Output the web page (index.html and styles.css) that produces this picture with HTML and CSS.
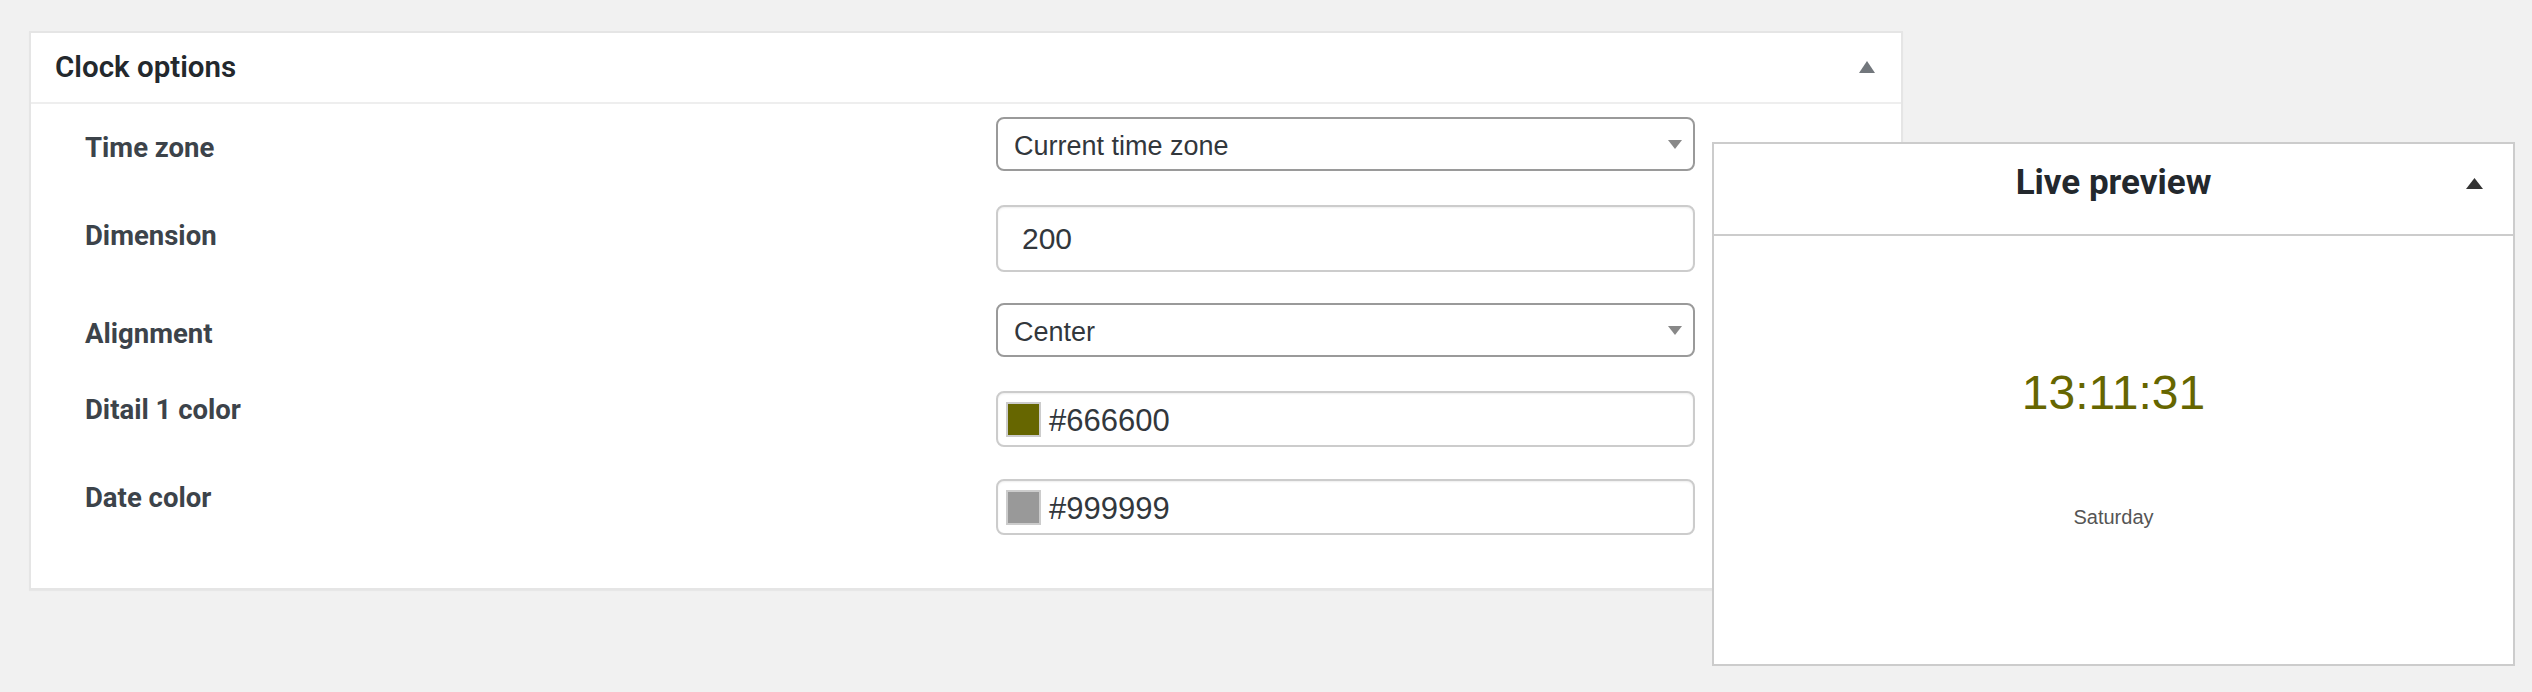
FILE: index.html
```html
<!DOCTYPE html>
<html lang="en">
<head>
<meta charset="utf-8">
<title>Clock options</title>
<link rel="stylesheet" href="styles.css">
</head>
<body>
<div class="page">
  <section class="postbox">
    <header class="postbox-head">
      <h2 class="postbox-title">Clock options</h2>
      <svg class="toggle" width="16" height="12" viewBox="0 0 16 12"><path d="M8 0L16 12H0Z" fill="#72777c"/></svg>
    </header>
    <div class="postbox-body">
      <div class="field-row">
        <div class="field-label">Time zone</div>
        <div class="select"><span>Current time zone</span><svg width="14" height="9" viewBox="0 0 14 9"><path d="M0 0H14L7 9Z" fill="#888"/></svg></div>
      </div>
      <div class="field-row row-number">
        <div class="field-label">Dimension</div>
        <div class="input input-number">200</div>
      </div>
      <div class="field-row row-after-number">
        <div class="field-label">Alignment</div>
        <div class="select"><span>Center</span><svg width="14" height="9" viewBox="0 0 14 9"><path d="M0 0H14L7 9Z" fill="#888"/></svg></div>
      </div>
      <div class="field-row is-color row-first-color">
        <div class="field-label">Ditail 1 color</div>
        <div class="input input-color"><span class="swatch swatch-olive"></span><span>#666600</span></div>
      </div>
      <div class="field-row is-color">
        <div class="field-label">Date color</div>
        <div class="input input-color"><span class="swatch swatch-gray"></span><span>#999999</span></div>
      </div>
    </div>
  </section>

  <aside class="preview">
    <header class="preview-head">
      <span></span>
      <h2 class="preview-title">Live preview</h2>
      <svg class="preview-toggle" width="17" height="11" viewBox="0 0 17 11"><path d="M8.5 0L17 11H0Z" fill="#333"/></svg>
    </header>
    <div class="preview-body">
      <div class="clock-time">13:11:31</div>
      <div class="clock-date">Saturday</div>
    </div>
  </aside>
</div>
</body>
</html>
```

FILE: styles.css
```css
html, body {
  margin: 0;
  background: #f1f1f1;
}

.page {
  position: relative;
  padding: 31px 0 0 29px;
  min-height: 692px;
  box-sizing: border-box;
}

.postbox {
  width: 1874px;
  box-sizing: border-box;
  background: #fff;
  border: 2px solid #e5e5e5;
  box-shadow: 0 1px 1px rgba(0, 0, 0, 0.04);
}

.postbox-head {
  display: flex;
  align-items: center;
  justify-content: space-between;
  padding: 16px 26px 17px 24px;
  border-bottom: 2px solid #eeeeee;
}

.postbox-title {
  margin: 0;
  font: 600 29.5px/36px Roboto, "Liberation Sans", sans-serif;
  color: #23282d;
}

.postbox-body {
  display: flex;
  flex-direction: column;
  gap: 32px;
  padding: 13px 0 53px 54px;
}

.field-row {
  display: grid;
  grid-template-columns: 911px 699px;
  align-items: start;
}

.row-number {
  margin-top: 2px;
}

.row-after-number {
  margin-top: -1px;
}

.row-first-color {
  margin-top: 2px;
}

.field-label {
  padding-top: 15px;
  font: 700 27.5px/32px Roboto, "Liberation Sans", sans-serif;
  color: #3c434a;
}

.is-color .field-label {
  padding-top: 3px;
}

.select {
  box-sizing: border-box;
  height: 54px;
  display: flex;
  align-items: center;
  justify-content: space-between;
  padding: 5px 11px 0 16px;
  border: 2px solid #9a9a9a;
  border-radius: 8px;
  background: #fff;
  font: 27px "Liberation Sans", Arial, sans-serif;
  color: #32373c;
}

.select svg {
  margin-top: -5px;
}

.input {
  box-sizing: border-box;
  display: flex;
  align-items: center;
  border: 2px solid #cccccc;
  border-radius: 8px;
  background: #fff;
  box-shadow: inset 0 1px 2px rgba(0, 0, 0, 0.07);
  font: 30px "Liberation Sans", Arial, sans-serif;
  color: #32373c;
}

.input-number {
  height: 67px;
  padding-left: 24px;
}

.input-color {
  height: 56px;
  padding: 0 0 0 8px;
  gap: 8px;
  font-size: 31px;
}

.input-color span:last-child {
  padding-top: 3px;
}

.swatch {
  width: 35px;
  height: 35px;
  box-sizing: border-box;
  border: 2px solid #cccccc;
}

.swatch-olive {
  background: #666600;
}

.swatch-gray {
  background: #999999;
}

.preview {
  position: absolute;
  left: 1712px;
  top: 142px;
  width: 803px;
  height: 524px;
  box-sizing: border-box;
  background: #fff;
  border: 2px solid #cccccc;
}

.preview-head {
  display: grid;
  grid-template-columns: 1fr auto 1fr;
  align-items: center;
  padding: 19px 30px 31px;
  border-bottom: 2px solid #cccccc;
}

.preview-title {
  margin: 0;
  font: 700 35px/40px Roboto, "Liberation Sans", sans-serif;
  color: #23282d;
}

.preview-toggle {
  justify-self: end;
}

.preview-body {
  padding-top: 129px;
  text-align: center;
  font-family: "Liberation Sans", Arial, sans-serif;
}

.clock-time {
  font-size: 48px;
  line-height: 56px;
  color: #666600;
}

.clock-date {
  margin-top: 84px;
  font-size: 20px;
  line-height: 24px;
  color: #555555;
}
```
